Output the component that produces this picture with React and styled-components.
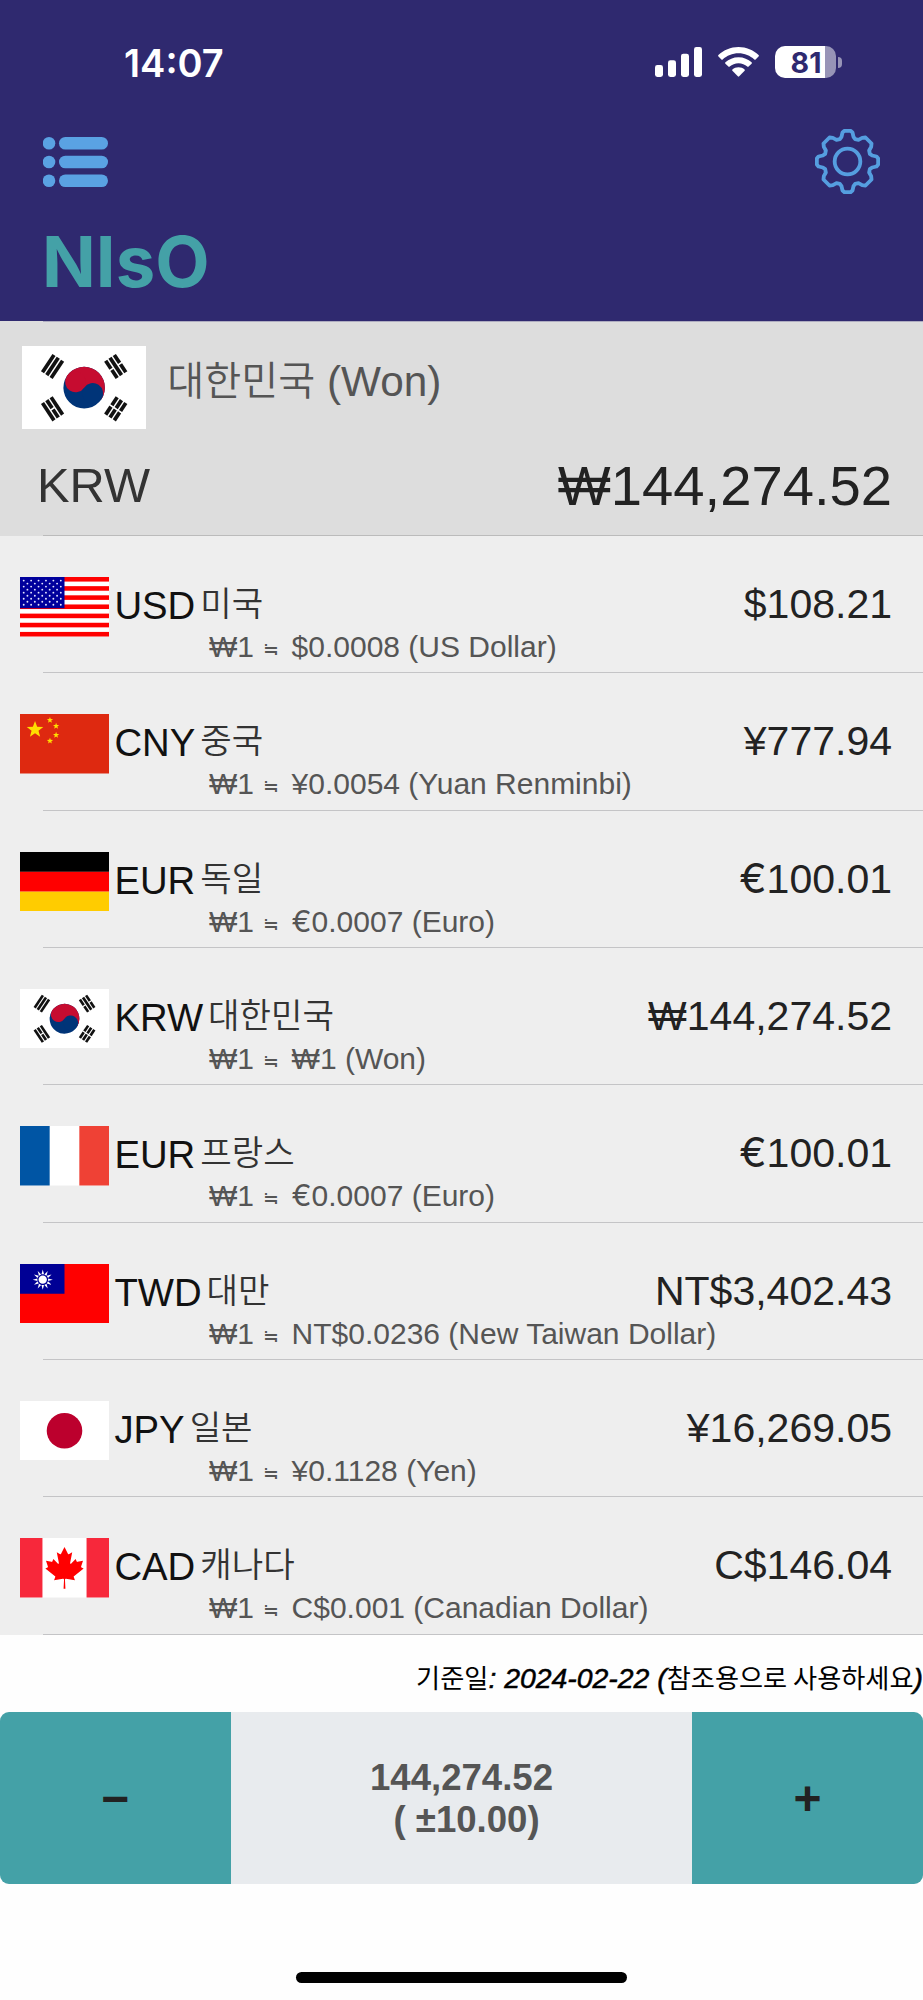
import React from "react";
import styled, { createGlobalStyle } from "styled-components";

const GlobalStyle = createGlobalStyle`
  body {
    margin: 0;
    background: #fff;
  }

  * {
    box-sizing: border-box;
  }
`;

const Screen = styled.div`
  width: 923px;
  height: 2000px;
  overflow: hidden;
  display: flex;
  flex-direction: column;
  background: #fefefe;
  font-family: "Liberation Sans", "Noto Sans CJK KR", sans-serif;
  white-space: nowrap;
`;

const TopBar = styled.header`
  height: 321px;
  flex: none;
  background: #2f296f;
`;

const StatusBar = styled.div`
  display: flex;
  justify-content: space-between;
  align-items: flex-start;
  height: 129px;
  padding: 40px 81px 0 124px;
`;

const Time = styled.span`
  font-family: Inter, sans-serif;
  font-size: 38px;
  font-weight: 600;
  line-height: 46px;
  color: #fff;
`;

const StatusIcons = styled.div`
  display: flex;
  align-items: center;
  gap: 16px;
  padding-top: 6px;
`;

const Battery = styled.div`
  display: flex;
  align-items: center;
  gap: 2px;
`;

const BatteryBody = styled.div`
  width: 61px;
  height: 32px;
  padding-left: 1px;
  border-radius: 10px;
  background: linear-gradient(to right, #fff 50px, #9794b7 50px);
  color: #2f296f;
  font-family: Inter, sans-serif;
  font-size: 28.5px;
  font-weight: 700;
  line-height: 33px;
  text-align: center;
`;

const BatteryTip = styled.div`
  width: 4px;
  height: 11px;
  border-radius: 0 5px 5px 0;
  background: #9794b7;
`;

const Toolbar = styled.div`
  display: flex;
  justify-content: space-between;
  align-items: center;
  height: 65px;
  padding: 0 43px;
`;

const IconButton = styled.button`
  display: flex;
  padding: 0;
  border: 0;
  background: none;
`;

const Title = styled.h1`
  margin: 28px 0 0 42px;
  font-family: Inter, sans-serif;
  font-size: 70.6px;
  font-weight: 700;
  line-height: 80px;
  color: #44a1a7;
`;

const BaseCard = styled.section`
  display: flex;
  flex-direction: column;
  height: 215px;
  flex: none;
  background: #ddd;
`;

const BaseCountry = styled.div`
  display: flex;
  height: 134px;
  padding: 24px 0 0 21.5px;
`;

const BaseName = styled.div`
  margin: 11px 0 0 21.5px;
  font-size: 42.3px;
  line-height: 50px;
  color: #555;
`;

const BaseAmount = styled.div`
  display: flex;
  flex: 1;
  justify-content: space-between;
  padding: 0 31px 0 37px;
  line-height: 60px;
`;

const BaseCode = styled.span`
  margin-top: -1px;
  font-size: 48.8px;
  color: #333;
`;

const BaseValue = styled.span`
  font-size: 56.2px;
  color: #222;
`;

const Hangul = styled.span`
  font-family: "Noto Sans CJK KR", sans-serif;
  font-weight: 350;
  font-size: ${(props) => props.$size}px;
  line-height: 1;
  vertical-align: 1px;
`;

const Divider = styled.div`
  height: 1px;
  flex: none;
  margin-left: 43px;
  background: ${(props) => props.$color || "#c4c4c6"};
`;

const RateList = styled.ul`
  flex: none;
  margin: 0;
  padding: 0;
  list-style: none;
  background: #eee;
`;

const RateItem = styled.li`
  height: 137.33px;
`;

const RateBody = styled.div`
  display: flex;
  height: 136.33px;
  padding: 41px 31px 0 20px;
`;

const FlagBox = styled.svg`
  display: block;
  flex: none;
  width: ${(props) => (props.$large ? 124.3 : 89)}px;
  height: ${(props) => (props.$large ? 83.3 : 59.5)}px;
`;

const RateInfo = styled.div`
  flex: 1;
  min-width: 0;
  padding: 7px 0 0 5.4px;
`;

const RateTop = styled.div`
  display: flex;
  height: 45px;
  line-height: 44px;
`;

const Code = styled.span`
  margin-right: 5px;
  font-size: 38.3px;
  color: #111;
`;

const CountryName = styled.span`
  color: #333;
`;

const Amount = styled.span`
  margin: -2px 0 0 auto;
  font-size: 41px;
  color: #222;
`;

const RateSub = styled.div`
  padding-left: 94.5px;
  font-size: 30px;
  line-height: 36px;
  color: #555;
`;

const Approx = styled.span`
  display: inline-block;
  width: 19px;
  margin: 0 1px;
  font-family: "Noto Sans CJK KR", sans-serif;
  font-size: 19px;
  line-height: 20px;
  vertical-align: 1px;
`;

const Euro = styled.span`
  font-family: Inter, sans-serif;
  line-height: 1;
`;

const Notice = styled.p`
  margin: 25px 0 16px;
  height: 36px;
  font-size: 28.4px;
  font-style: italic;
  line-height: 36px;
  text-align: right;
  color: #000;
  -webkit-text-stroke: 0.5px #000;
`;

const Upright = styled.span`
  font-family: "Noto Sans CJK KR", sans-serif;
  font-style: normal;
  font-size: 26.2px;
  line-height: 1;
  -webkit-text-stroke: 0;
`;

const Stepper = styled.div`
  display: grid;
  grid-template-columns: 1fr 2fr 1fr;
  height: 172px;
  flex: none;
  border-radius: 9px;
  overflow: hidden;
  background: #e8ebee;
`;

const StepButton = styled.button`
  padding: 1px 0 0;
  border: 0;
  background: #44a1a7;
  color: #222;
  font-family: "Liberation Sans", sans-serif;
  font-size: 48px;
  font-weight: 700;
`;

const StepValue = styled.div`
  padding-top: 45px;
  text-align: center;
  font-size: 36.6px;
  font-weight: 700;
  line-height: 42px;
  color: #555;
`;

const HomeIndicator = styled.div`
  width: 331px;
  height: 11px;
  margin: 88px auto 0;
  border-radius: 6px;
  background: #000;
`;

const starPoints = (cx, cy, r) =>
  Array.from({ length: 10 }, (_, i) => {
    const radius = i % 2 ? r * 0.42 : r;
    const angle = (Math.PI / 5) * i - Math.PI / 2;
    return `${cx + radius * Math.cos(angle)},${cy + radius * Math.sin(angle)}`;
  }).join(" ");

// three bars of a trigram, 1 = solid, 0 = broken
const Trigram = ({ x, bars }) =>
  bars.map((solid, i) => {
    const left = x - 5.1 + i * 3.75;
    return solid ? (
      <rect key={i} x={left} y={-7.5} width={2.7} height={15} />
    ) : (
      <g key={i}>
        <rect x={left} y={-7.5} width={2.7} height={6.9} />
        <rect x={left} y={0.6} width={2.7} height={6.9} />
      </g>
    );
  });

const KoreaFlag = () => (
  <>
    <rect width="90" height="60" fill="#fff" />
    <g transform="translate(45 30) rotate(33.69)">
      <circle r="15" fill="#003478" />
      <path d="M-15 0a15 15 0 0 1 30 0z" fill="#c60c30" />
      <circle cx="-7.5" r="7.5" fill="#c60c30" />
      <circle cx="7.5" r="7.5" fill="#003478" />
      <g fill="#111">
        <Trigram x={-27.5} bars={[1, 1, 1]} />
        <Trigram x={27.5} bars={[0, 0, 0]} />
      </g>
    </g>
    <g transform="translate(45 30) rotate(-33.69)" fill="#111">
      <Trigram x={-27.5} bars={[1, 0, 1]} />
      <Trigram x={27.5} bars={[0, 1, 0]} />
    </g>
  </>
);

const UsaFlag = () => (
  <>
    <rect width="90" height="60" fill="#fff" />
    {[0, 2, 4, 6, 8, 10, 12].map((n) => (
      <rect key={n} y={(n * 60) / 13} width="90" height={60 / 13} fill="#f00" />
    ))}
    <rect width="45" height="31.5" fill="#00009c" />
    {Array.from({ length: 9 }, (_, row) =>
      Array.from({ length: row % 2 ? 5 : 6 }, (_, col) => (
        <circle
          key={`${row}-${col}`}
          cx={(row % 2 ? 7.5 : 3.75) + col * 7.5}
          cy={3.6 + row * 3.05}
          r="0.95"
          fill="#e6e6ff"
        />
      ))
    )}
  </>
);

const ChinaFlag = () => (
  <>
    <rect width="90" height="60" fill="#de2910" />
    <g fill="#ffde00">
      <polygon points={starPoints(15.2, 15.8, 8.8)} />
      <polygon points={starPoints(30.3, 6.2, 3.3)} />
      <polygon points={starPoints(36.5, 12.2, 3.3)} />
      <polygon points={starPoints(36.5, 21.2, 3.3)} />
      <polygon points={starPoints(30.3, 27.2, 3.3)} />
    </g>
  </>
);

const GermanyFlag = () => (
  <>
    <rect width="90" height="20" fill="#000" />
    <rect y="20" width="90" height="20" fill="#f00" />
    <rect y="40" width="90" height="20" fill="#fc0" />
  </>
);

const FranceFlag = () => (
  <>
    <rect width="90" height="60" fill="#fff" />
    <rect width="30" height="60" fill="#0055a4" />
    <rect x="60" width="30" height="60" fill="#ef4135" />
  </>
);

const TaiwanFlag = () => (
  <>
    <rect width="90" height="60" fill="#f00" />
    <rect width="45" height="30" fill="#000095" />
    <g transform="translate(23 15.8)" fill="#fff">
      {Array.from({ length: 12 }, (_, i) => (
        <polygon key={i} points="-1.3,-5.4 0,-10.2 1.3,-5.4" transform={`rotate(${i * 30})`} />
      ))}
      <circle r="4.2" />
    </g>
  </>
);

const JapanFlag = () => (
  <>
    <rect width="90" height="60" fill="#fff" />
    <circle cx="45" cy="30" r="18" fill="#bc002d" />
  </>
);

const CanadaFlag = () => (
  <>
    <rect width="90" height="60" fill="#fff" />
    <rect width="22.7" height="60" fill="#f7283b" />
    <rect x="67.3" width="22.7" height="60" fill="#f7283b" />
    <path
      transform="translate(45 30) scale(0.0104)"
      fill="#f00"
      d="m-90 2030 45-863a95 95 0 0 0-111-98l-859 151 116-320a65 65 0 0 0-20-73l-941-762 212-99a65 65 0 0 0 34-79l-186-572 542 115a65 65 0 0 0 73-38l105-247 423 454a65 65 0 0 0 111-57l-204-1052 327 189a65 65 0 0 0 91-27l332-652 332 652a65 65 0 0 0 91 27l327-189-204 1052a65 65 0 0 0 111 57l423-454 105 247a65 65 0 0 0 73 38l542-115-186 572a65 65 0 0 0 34 79l212 99-941 762a65 65 0 0 0-20 73l116 320-859-151a95 95 0 0 0-111 98l45 863z"
    />
  </>
);

const flags = {
  kr: KoreaFlag,
  us: UsaFlag,
  cn: ChinaFlag,
  de: GermanyFlag,
  fr: FranceFlag,
  tw: TaiwanFlag,
  jp: JapanFlag,
  ca: CanadaFlag,
};

const Flag = ({ country, large }) => {
  const Drawing = flags[country];
  return (
    <FlagBox $large={large} viewBox="0 0 90 60" preserveAspectRatio="none">
      <Drawing />
    </FlagBox>
  );
};

const SignalIcon = () => (
  <svg width="47" height="30" viewBox="0 0 47 30" fill="#fff">
    <rect x="0" y="18" width="8" height="12" rx="2.4" />
    <rect x="13" y="13.2" width="8" height="16.8" rx="2.4" />
    <rect x="26" y="6.7" width="8" height="23.3" rx="2.4" />
    <rect x="39" y="0" width="8" height="30" rx="2.4" />
  </svg>
);

const WifiIcon = () => (
  <svg width="41" height="30" viewBox="0 0 41 30" fill="#fff">
    <path d="M20.5 0C28.3 0 35.4 3 40.6 8Q41.2 8.7 40.5 9.4L37.6 12.4Q37 13 36.3 12.4C32.2 8.6 26.6 6.2 20.5 6.2S8.8 8.6 4.7 12.4Q4 13 3.4 12.4L.5 9.4Q-.2 8.7 .4 8C5.6 3 12.7 0 20.5 0z" />
    <path d="M20.5 10.2C25.6 10.2 30.2 12.2 33.6 15.3Q34.3 16 33.6 16.7L30.6 19.6Q30 20.2 29.3 19.6C27 17.5 23.9 16.2 20.5 16.2S14 17.5 11.7 19.6Q11 20.2 10.4 19.6L7.4 16.7Q6.7 16 7.4 15.3C10.8 12.2 15.4 10.2 20.5 10.2z" />
    <path d="M20.5 20.2C22.9 20.2 25 21 26.6 22.4Q27.2 23 26.6 23.7L21.2 29.3Q20.5 30 19.8 29.3L14.4 23.7Q13.8 23 14.4 22.4C16 21 18.1 20.2 20.5 20.2z" />
  </svg>
);

const ListIcon = () => (
  <svg width="65" height="50" viewBox="0 0 65 50" fill="#5aa2e3">
    {[6.3, 25, 43.7].map((cy) => (
      <g key={cy}>
        <circle cx="6" cy={cy} r="6.3" />
        <rect x="16" y={cy - 6.3} width="49" height="12.6" rx="6.3" />
      </g>
    ))}
  </svg>
);

const gearQuarter = [
  [9, -92], [15, -87], [18, -74], [23, -67], [33, -65], [44, -71], [54, -72],
  [72, -54], [71, -44], [65, -33], [67, -23], [74, -18], [87, -15], [92, -9],
];

// the same quarter outline turned by 90 degrees four times
const gearPoints = [0, 1, 2, 3]
  .flatMap((turn) =>
    gearQuarter.map(([x, y]) => {
      let point = [x, y];
      for (let i = 0; i < turn; i++) point = [-point[1], point[0]];
      return point.join(",");
    })
  )
  .join(" ");

const GearIcon = () => (
  <svg
    width="65"
    height="65"
    viewBox="-97.5 -97.5 195 195"
    fill="none"
    stroke="#559ee0"
    strokeWidth="11.5"
    strokeLinejoin="round"
  >
    <polygon points={gearPoints} />
    <circle r="38.5" />
  </svg>
);

const rates = [
  { flag: "us", code: "USD", name: "미국", sign: "$", amount: "108.21", rate: "0.0008 (US Dollar)" },
  { flag: "cn", code: "CNY", name: "중국", sign: "¥", amount: "777.94", rate: "0.0054 (Yuan Renminbi)" },
  { flag: "de", code: "EUR", name: "독일", sign: "€", amount: "100.01", rate: "0.0007 (Euro)" },
  { flag: "kr", code: "KRW", name: "대한민국", sign: "₩", amount: "144,274.52", rate: "1 (Won)" },
  { flag: "fr", code: "EUR", name: "프랑스", sign: "€", amount: "100.01", rate: "0.0007 (Euro)" },
  { flag: "tw", code: "TWD", name: "대만", sign: "NT$", amount: "3,402.43", rate: "0.0236 (New Taiwan Dollar)" },
  { flag: "jp", code: "JPY", name: "일본", sign: "¥", amount: "16,269.05", rate: "0.1128 (Yen)" },
  { flag: "ca", code: "CAD", name: "캐나다", sign: "C$", amount: "146.04", rate: "0.001 (Canadian Dollar)" },
];

const Money = ({ sign, children }) => (
  <>
    {sign === "€" ? <Euro>€</Euro> : sign}
    {children}
  </>
);

const RateRow = ({ item }) => (
  <RateItem>
    <RateBody>
      <Flag country={item.flag} />
      <RateInfo>
        <RateTop>
          <Code>{item.code}</Code>
          <CountryName>
            <Hangul $size={34.2}>{item.name}</Hangul>
          </CountryName>
          <Amount>
            <Money sign={item.sign}>{item.amount}</Money>
          </Amount>
        </RateTop>
        <RateSub>
          ₩1 <Approx>≒</Approx> <Money sign={item.sign}>{item.rate}</Money>
        </RateSub>
      </RateInfo>
    </RateBody>
    <Divider />
  </RateItem>
);

const App = () => {
  return (
    <Screen>
      <GlobalStyle />
      <TopBar>
        <StatusBar>
          <Time>14:07</Time>
          <StatusIcons>
            <SignalIcon />
            <WifiIcon />
            <Battery>
              <BatteryBody>81</BatteryBody>
              <BatteryTip />
            </Battery>
          </StatusIcons>
        </StatusBar>
        <Toolbar>
          <IconButton aria-label="list">
            <ListIcon />
          </IconButton>
          <IconButton aria-label="settings">
            <GearIcon />
          </IconButton>
        </Toolbar>
        <Title>NIsO</Title>
      </TopBar>
      <BaseCard>
        <Divider $color="#aeacc0" />
        <BaseCountry>
          <Flag country="kr" large />
          <BaseName>
            <Hangul $size={40.2}>대한민국</Hangul> (Won)
          </BaseName>
        </BaseCountry>
        <BaseAmount>
          <BaseCode>KRW</BaseCode>
          <BaseValue>₩144,274.52</BaseValue>
        </BaseAmount>
        <Divider $color="#bbb" />
      </BaseCard>
      <RateList>
        {rates.map((item) => (
          <RateRow key={item.flag} item={item} />
        ))}
      </RateList>
      <Notice>
        <Upright>기준일</Upright>: 2024-02-22 (<Upright>참조용으로 사용하세요</Upright>)
      </Notice>
      <Stepper>
        <StepButton>−</StepButton>
        <StepValue>
          144,274.52
          <br />
          &nbsp;( ±10.00)
        </StepValue>
        <StepButton>+</StepButton>
      </Stepper>
      <HomeIndicator />
    </Screen>
  );
};

export default App;
